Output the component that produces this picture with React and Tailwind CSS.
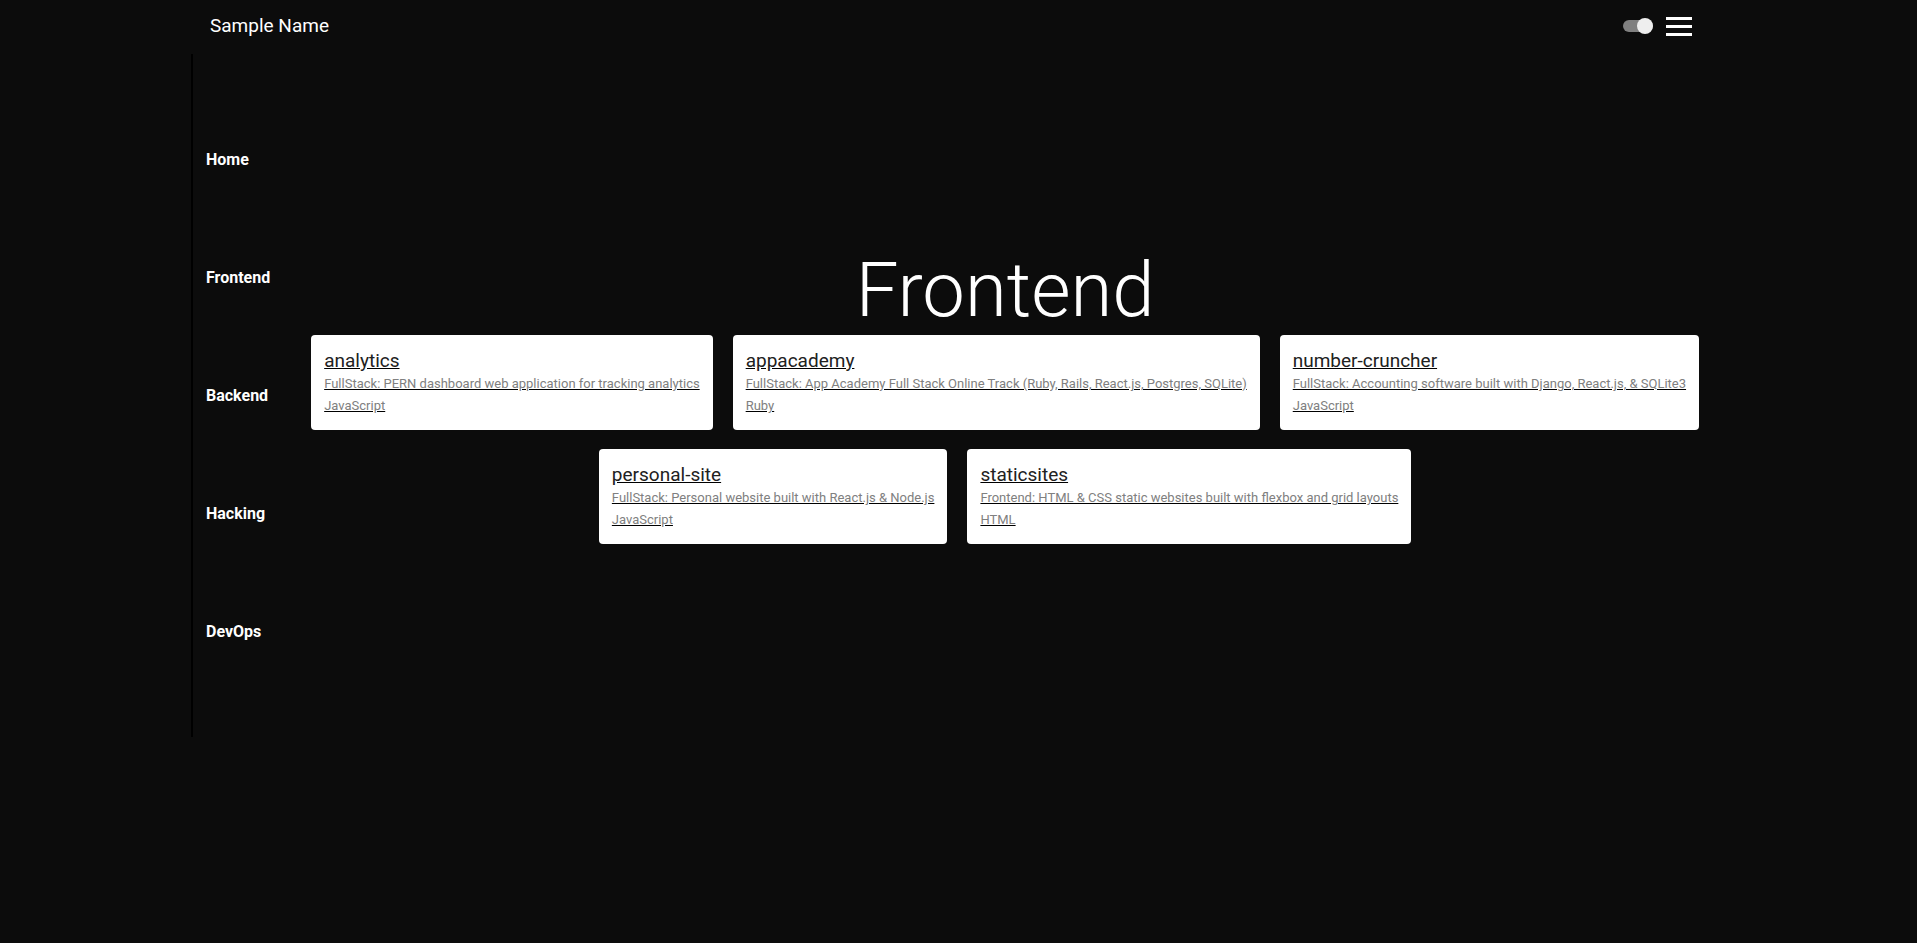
const sections = ["Home", "Frontend", "Backend", "Hacking", "DevOps"];

const projects = [
  { name: "analytics", about: "FullStack: PERN dashboard web application for tracking analytics", language: "JavaScript" },
  { name: "appacademy", about: "FullStack: App Academy Full Stack Online Track (Ruby, Rails, React.js, Postgres, SQLite)", language: "Ruby" },
  { name: "number-cruncher", about: "FullStack: Accounting software built with Django, React.js, & SQLite3", language: "JavaScript" },
  { name: "personal-site", about: "FullStack: Personal website built with React.js & Node.js", language: "JavaScript" },
  { name: "staticsites", about: "Frontend: HTML & CSS static websites built with flexbox and grid layouts", language: "HTML" },
];

function Header() {
  return (
    <header className="flex items-center justify-between pt-3 pr-[34px] pb-[14px] pl-[19px]">
      <a href="#home" className="text-[19px] leading-7">Sample Name</a>
      <div className="flex items-center gap-[13px]">
        <label className="relative flex h-4 w-[30px] cursor-pointer items-center">
          <input type="checkbox" role="switch" defaultChecked aria-label="Dark mode" className="peer h-3 w-[30px] cursor-pointer appearance-none rounded-full bg-[#808080]" />
          <span className="absolute left-0 top-0 size-4 rounded-full bg-[#eeeeee] peer-checked:left-[14px]" />
        </label>
        <button type="button" aria-label="Open menu" className="flex w-[26px] cursor-pointer flex-col gap-[5px]">
          <span className="h-[3px] w-full bg-white" />
          <span className="h-[3px] w-full bg-white" />
          <span className="h-[3px] w-full bg-white" />
        </button>
      </div>
    </header>
  );
}

function SideNav() {
  return (
    <nav className="flex shrink-0 flex-col gap-[94px] border-l-2 border-black pt-[94px] pb-[93px] pl-[13px]">
      {sections.map((name) => (
        <a key={name} href={"#" + name.toLowerCase()} className="text-base leading-6 font-bold">{name}</a>
      ))}
    </nav>
  );
}

function ProjectCard({ name, about, language }) {
  return (
    <a href={"#" + name} className="rounded bg-white px-[13px] pt-[14px] pb-[13px] text-black underline">
      <h2 className="text-[19px] leading-6 text-[#212121] decoration-black">{name}</h2>
      <p className="text-[13px] leading-[22px] text-[#808080] decoration-black">{about}</p>
      <p className="text-[13px] leading-[22px] text-[#808080] decoration-black">{language}</p>
    </a>
  );
}

export default function App() {
  return (
    <div className="min-h-screen bg-[#0c0c0c] font-['Roboto',sans-serif] text-white">
      <div className="mx-auto max-w-[1535px]">
        <Header />
        <div className="flex">
          <SideNav />
          <main className="flex grow flex-col items-center justify-center pl-[14px]">
            <h1 className="pt-2 text-[76px] leading-[90px] font-light">Frontend</h1>
            <div className="mb-[10px] flex flex-wrap justify-center gap-x-5 gap-y-[19px]">
              {projects.map((project) => (
                <ProjectCard key={project.name} {...project} />
              ))}
            </div>
          </main>
        </div>
      </div>
    </div>
  );
}
